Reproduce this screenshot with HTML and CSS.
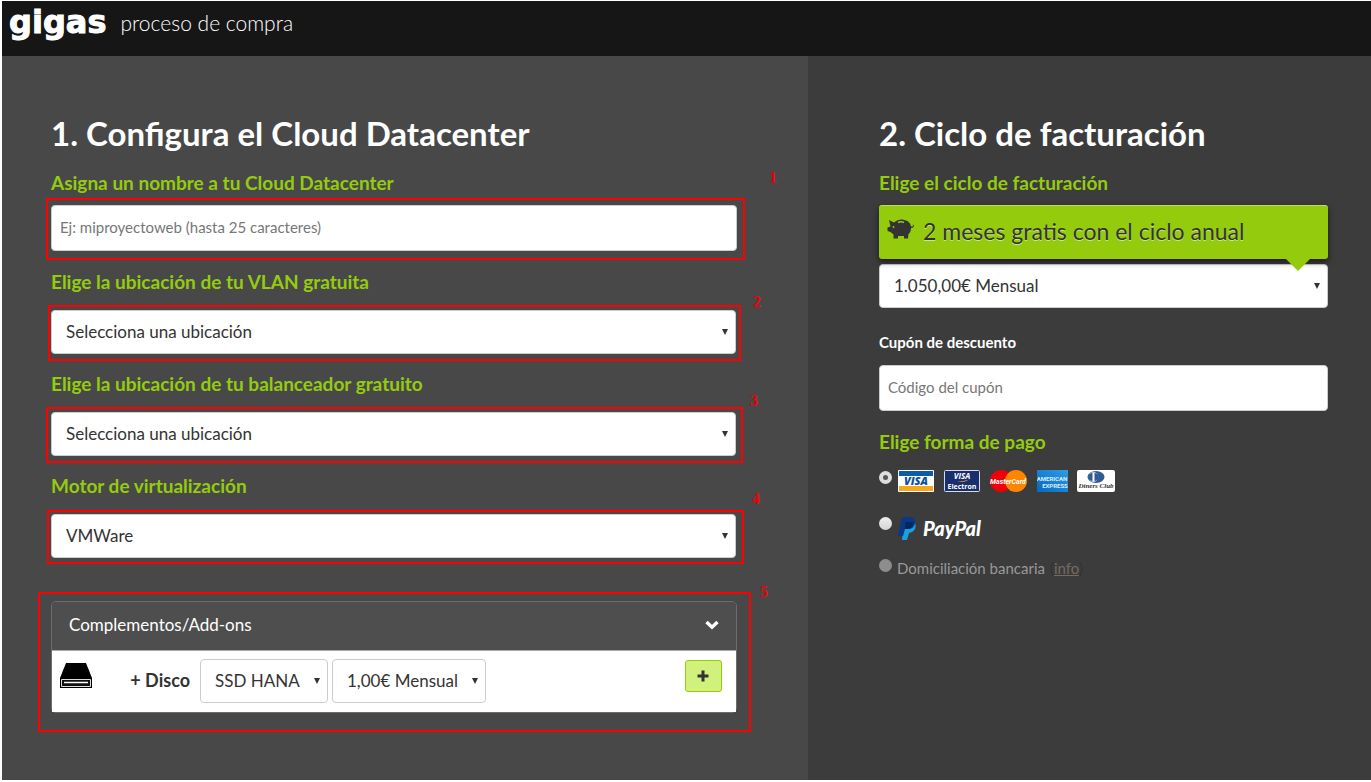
FILE: index.html
```html
<!DOCTYPE html>
<html lang="es">
<head>
<meta charset="utf-8">
<title>gigas - proceso de compra</title>
<link rel="stylesheet" href="styles.css">
</head>
<body>
<header class="topbar">
  <span class="brand">gigas</span>
  <span class="tagline">proceso de compra</span>
</header>
<main class="columns">
  <section class="config">
    <h1 class="title">1. Configura el Cloud Datacenter</h1>
    <label class="label" for="name">Asigna un nombre a tu Cloud Datacenter</label>
    <div class="control control-name">
      <input class="text-input" id="name" type="text" placeholder="Ej: miproyectoweb (hasta 25 caracteres)">
      <span class="mark mark-name"></span><span class="step step-name">1</span>
    </div>
    <label class="label" for="vlan">Elige la ubicación de tu VLAN gratuita</label>
    <div class="control picker">
      <select class="select" id="vlan"><option>Selecciona una ubicación</option></select>
      <span class="mark mark-vlan"></span><span class="step step-vlan">2</span>
    </div>
    <label class="label" for="balancer">Elige la ubicación de tu balanceador gratuito</label>
    <div class="control picker">
      <select class="select" id="balancer"><option>Selecciona una ubicación</option></select>
      <span class="mark mark-balancer"></span><span class="step step-balancer">3</span>
    </div>
    <label class="label" for="engine">Motor de virtualización</label>
    <div class="control picker">
      <select class="select" id="engine"><option>VMWare</option></select>
      <span class="mark mark-engine"></span><span class="step step-engine">4</span>
    </div>
    <div class="addons">
      <button class="addons-head" type="button">
        <span>Complementos/Add-ons</span>
        <svg width="14" height="10" viewBox="0 0 14 10"><path d="M1.500 2L7 7.200L12.500 2" fill="none" stroke="#fff" stroke-width="3.400"/></svg>
      </button>
      <div class="addons-row">
        <svg class="disk" width="32" height="25" viewBox="0 0 32 25">
          <path d="M6 0H26L32 15V25H0V15Z" fill="#000"/>
          <path d="M1.500 16.500H30.500V23.500H1.500Z" fill="#111" stroke="#ddd"/>
          <path d="M4 19.500H28" stroke="#fff" stroke-width="1.500"/>
        </svg>
        <span class="disk-label">+ Disco</span>
        <div class="picker"><select class="select select-type" aria-label="Tipo de disco"><option>SSD HANA</option></select></div>
        <div class="picker"><select class="select select-price" aria-label="Precio"><option>1,00€ Mensual</option></select></div>
        <button class="add" type="button" aria-label="Añadir"><svg width="12" height="12" viewBox="0 0 12 12"><path d="M6 0.500V11.500M0.500 6H11.500" stroke="#333" stroke-width="3"/></svg></button>
      </div>
      <span class="mark mark-addons"></span><span class="step step-addons">5</span>
    </div>
  </section>
  <section class="billing">
    <h2 class="title">2. Ciclo de facturación</h2>
    <label class="label" for="cycle">Elige el ciclo de facturación</label>
    <div class="promo">
      <svg class="pig" width="28" height="21" viewBox="0 0 28 21">
        <path d="M2 1L7 3.500C10 1 14 0 17 1C21 1.500 23.500 4 24 7.500C26 8 26.500 6.500 25.500 5.500C27.500 6 27.500 9 24 9C24 12 23 14 21.500 15L21 19.500H17V17H11V19.500H6.500V15.500L3.500 13L0.500 12V8.500L3.500 7.500Z" fill="#333"/>
        <path d="M11 3.500C13 2.500 15 2.500 17 3.500" stroke="#94cc0d" stroke-width="1.500" fill="none"/><circle cx="6.500" cy="8" r="0.900" fill="#94cc0d"/>
      </svg>
      <span>2 meses gratis con el ciclo anual</span>
    </div>
    <div class="picker"><select class="select" id="cycle"><option>1.050,00€ Mensual</option></select></div>
    <label class="coupon-label" for="coupon">Cupón de descuento</label>
    <input class="text-input" id="coupon" type="text" placeholder="Código del cupón">
    <h3 class="label pay-label">Elige forma de pago</h3>
    <div class="pay pay-cards">
      <input class="radio radio-on" type="radio" name="pay" id="cards" checked>
      <label class="cards" for="cards">
        <svg width="36" height="22" viewBox="0 0 36 22" role="img" aria-label="Visa"><rect width="36" height="22" rx="1" fill="#fff"/><rect x="1" y="1" width="34" height="5" fill="#0b5cab"/><rect x="1" y="16" width="34" height="5" fill="#f5a81c"/><text x="18" y="15" class="logo-visa">VISA</text></svg>
        <svg width="36" height="22" viewBox="0 0 36 22" role="img" aria-label="Visa Electron"><rect x="0.500" y="0.500" width="35" height="21" rx="1" fill="#182e6f" stroke="#d5dbea"/><text x="18" y="9" class="logo-electron">VISA</text><path d="M13 12Q20 11 25 9.500Q21 12.500 13 12Z" fill="#f5a81c"/><text x="18" y="19" class="logo-small">Electron</text></svg>
        <svg width="37" height="22" viewBox="0 0 37 22" role="img" aria-label="MasterCard"><circle cx="11" cy="11" r="11" fill="#ed0008"/><circle cx="26" cy="11" r="11" fill="#ff8500"/><text x="18" y="14" class="logo-master">MasterCard</text></svg>
        <svg class="amex" width="31" height="22" viewBox="0 0 31 22" role="img" aria-label="American Express"><defs><linearGradient id="sky" x1="0" y1="1" x2="1" y2="0"><stop stop-color="#0668be"/><stop offset="1" stop-color="#319be5"/></linearGradient></defs><rect width="31" height="22" fill="url(#sky)"/><text x="15" y="11" class="logo-amex">AMERICAN</text><text x="18" y="18" class="logo-amex">EXPRESS</text></svg>
        <svg width="38" height="22" viewBox="0 0 38 22" role="img" aria-label="Diners Club"><rect width="38" height="22" rx="2" fill="#fff"/><ellipse cx="19" cy="7" rx="8.500" ry="6" fill="#2c5c91"/><circle cx="16.500" cy="7" r="4.800" fill="#fff"/><path d="M15.500 3A4 4 0 0 0 15.500 11ZM17.500 3A4 4 0 0 1 17.500 11Z" fill="#2c5c91"/><text x="19" y="18" class="logo-diners">Diners Club</text></svg>
      </label>
    </div>
    <div class="pay pay-paypal">
      <input class="radio" type="radio" name="pay" id="paypal">
      <label for="paypal"><svg width="92" height="24" viewBox="0 0 92 24" role="img" aria-label="PayPal"><path d="M6 5H15C19 7 19 16 11 17L9 24H4Z" fill="#1aa0df"/><path d="M4 1H12C20 1 18 14 10 13H7L5 20H0Z" fill="#093886"/><path d="M7.500 6H15.500C15 11 12 13.500 7 13Z" fill="#06265f"/><text x="25" y="20" class="logo-paypal">PayPal</text></svg></label>
    </div>
    <div class="pay pay-bank">
      <input class="radio" type="radio" name="pay" id="bank" disabled>
      <label for="bank">Domiciliación bancaria</label> <span class="info"><span class="paren">(</span><a href="#info">info</a><span class="paren">)</span></span>
    </div>
  </section>
</main>
</body>
</html>
```
FILE: styles.css
```css
* { box-sizing: border-box; }
body {
  margin: 0;
  padding: 1px 0 2px 2px;
  min-height: 100vh;
  display: flex;
  flex-direction: column;
  background: #fff;
  color: #fff;
  font-family: Lato, "Open Sans", sans-serif;
  font-size: 17px;
}
.topbar {
  display: flex;
  align-items: flex-start;
  gap: 14px;
  height: 55px;
  padding-left: 7px;
  background: #161616;
}
.brand {
  font: bold 32px/42px "DejaVu Sans", sans-serif;
  -webkit-text-stroke: 1px #fff;
}
.tagline { font-size: 21px; line-height: 44px; font-weight: 300; }
.columns { flex: 1; display: grid; grid-template-columns: 806fr 563fr; }
.config { background: #484848; padding: 57px 71px 24px 49px; }
.billing { background: #3c3c3c; padding: 57px 43px 24px 71px; }
.title { margin: 0 0 18px; font-size: 33px; line-height: 40px; font-weight: 700; }
.label {
  display: block;
  margin: 0 0 10px;
  color: #94cc0d;
  font-size: 19px;
  line-height: 24px;
  font-weight: 700;
}
.control { position: relative; margin-bottom: 18px; }
.control-name { margin-bottom: 19px; }
.control.picker { margin-top: 16px; margin-right: 1px; }
.text-input {
  display: block;
  width: 100%;
  height: 46px;
  padding: 0 8px 2px;
  border: 1px solid #ccc;
  border-radius: 4px;
  background: #fff;
  color: #333;
  font: 15px Lato, sans-serif;
}
.text-input::placeholder { color: #777; opacity: 1; }
.picker { position: relative; }
.picker::after {
  content: "";
  position: absolute;
  right: 8px;
  top: 19px;
  border: 3px solid transparent;
  border-top: 6px solid #333;
  border-bottom: 0;
  pointer-events: none;
}
.select {
  appearance: none;
  display: block;
  width: 100%;
  height: 44px;
  padding: 0 14px 2px;
  border: 1px solid #ccc;
  border-radius: 4px;
  background: #fff;
  color: #333;
  font: 17px Lato, sans-serif;
}
.mark { position: absolute; border: 2px solid #f00; pointer-events: none; }
.mark-name { inset: -7px -8px -9px -5px; }
.mark-vlan { inset: -5px -5px -7px -3px; }
.mark-balancer { inset: -5px -7px -7px -5px; }
.mark-engine { inset: -4px -8px -6px -4px; }
.mark-addons { inset: -10px -15px -20px -14px; }
.step { position: absolute; color: #f0000b; font: bold 16px/18px "Liberation Serif", serif; }
.step-name { right: -40px; top: -36px; }
.step-vlan { right: -25px; top: -17px; }
.step-balancer { right: -22px; top: -20px; }
.step-engine { right: -24px; top: -24px; }
.step-addons { right: -32px; top: -19px; }
.addons {
  position: relative;
  margin-top: 43px;
  border: 1px solid #6d6d6d;
  border-radius: 5px;
}
.addons-head {
  display: flex;
  justify-content: space-between;
  align-items: center;
  width: 100%;
  height: 48px;
  padding: 0 17px 3px;
  border: 0;
  border-radius: 4px 4px 0 0;
  background: #4e4e4e;
  color: #fff;
  font: 17px Lato, sans-serif;
}
.addons-row {
  display: flex;
  align-items: flex-start;
  gap: 4px;
  padding: 8px 14px 9px 8px;
  border-top: 1px solid #aaa;
  background: #fff;
  color: #333;
}
.disk { margin-top: 4px; }
.disk-label { width: 100px; padding-right: 6px; font-size: 18px; line-height: 42px; font-weight: 700; text-align: right; }
.select-type { width: 128px; }
.select-price { width: 154px; }
.add {
  display: grid;
  place-items: center;
  margin: 1px 0 0 auto;
  width: 37px;
  height: 32px;
  padding: 0 2px 0 0;
  border: 1px solid #94cc0d;
  border-radius: 3px;
  background: #d0f17c;
}
.promo {
  position: relative;
  z-index: 1;
  display: flex;
  gap: 8px;
  height: 54px;
  margin-bottom: 5px;
  padding-left: 8px;
  border-top: 1px solid #b9de62;
  border-radius: 3px;
  background: #94cc0d;
  box-shadow: 0 3px 6px #0008;
  color: #333;
  font-size: 23px;
  line-height: 51px;
  text-shadow: 0 1px #cde68c;
}
.promo::after {
  content: "";
  position: absolute;
  right: 18px;
  top: 100%;
  border: 12px solid transparent;
  border-top-color: #94cc0d;
  border-bottom: 0;
}
.pig { margin-top: 13px; }
.coupon-label { display: block; margin: 22px 0 11px; font-size: 15px; line-height: 24px; font-weight: 700; }
.pay-label { margin: 19px 0 16px; }
.pay { display: flex; align-items: flex-start; gap: 6px; }
.pay-cards { height: 46px; }
.pay-paypal { height: 42px; }
.pay-bank { gap: 5px; color: #999; font-size: 15px; line-height: 20px; }
.radio {
  appearance: none;
  width: 13px;
  height: 13px;
  margin: 1px 0;
  border-radius: 50%;
  background: linear-gradient(#eee, #d5d5d5);
}
.radio-on:checked { border: 4px solid #dedede; background: #555; }
.radio:disabled { background: #8d8d8d; }
.cards { display: flex; gap: 10px; }
.amex { margin-right: -1px; }
.info a { color: #77695f; }
.paren { color: #333; }
.logo-visa, .logo-electron, .logo-small, .logo-master, .logo-amex, .logo-diners { text-anchor: middle; }
.logo-visa { font: italic 800 11px "Open Sans", sans-serif; fill: #0b4f9e; }
.logo-electron { font: italic bold 8px "Open Sans", sans-serif; fill: #fff; }
.logo-small { font: bold 7px "Open Sans", sans-serif; fill: #fff; }
.logo-master { font: italic bold 7px Roboto, sans-serif; fill: #fff; }
.logo-amex { font: bold 6px Roboto, sans-serif; fill: #d9efff; }
.logo-diners { font: italic bold 7px "Liberation Serif", serif; fill: #333; }
.logo-paypal { font: italic 900 20px Lato, sans-serif; fill: #fff; }
```
